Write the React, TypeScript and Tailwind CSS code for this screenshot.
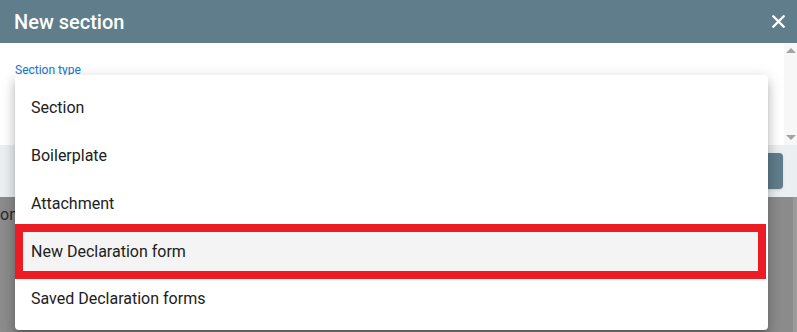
import { X } from "lucide-react";

const items = [
  "Section",
  "Boilerplate",
  "Attachment",
  "New Declaration form",
  "Saved Declaration forms",
];

export default function App() {
  return (
    <div className="relative w-[797px] h-[332px] overflow-hidden bg-[#8b8b8b] font-['Roboto',sans-serif]">
      <div className="flex flex-col">
        <header className="flex h-[43px] items-center justify-between bg-[#607d8b] pl-[14px] pr-[8px] text-white">
          <h1 className="text-[20px] font-medium leading-none">New section</h1>
          <X className="h-[21px] w-[21px]" strokeWidth={2.75} />
        </header>
        <div className="flex h-[102px] bg-white">
          <div className="flex-1 pl-[15px] pt-[21px]">
            <p className="text-[12px] leading-none text-[#1976d2]">Section type</p>
          </div>
          <div className="flex w-[13px] flex-col items-center justify-between bg-[#f7f7f7] py-[5px]">
            <span className="h-0 w-0 border-x-[5px] border-b-[5px] border-x-transparent border-b-[#a3a3a3]" />
            <span className="h-0 w-0 border-x-[5px] border-t-[5px] border-x-transparent border-t-[#a3a3a3]" />
          </div>
        </div>
        <div className="flex h-[52px] items-start justify-end bg-[#eceff1] pr-[14px] pt-[8px]">
          <button className="h-[36px] rounded-[4px] bg-[#607d8b] px-4 text-[14px] font-medium text-white shadow">
            SAVE
          </button>
        </div>
        <div className="flex h-[135px]">
          <p className="mt-[6px] text-[16px] text-[#2a2a2a]">on</p>
          <div className="ml-auto h-full w-[4px] bg-[#9a9a9a]" />
        </div>
      </div>

      <ul className="absolute left-[15px] top-[75px] w-[753px] rounded-[4px] bg-white pb-[7px] pt-[9px] shadow-[0_5px_5px_-3px_rgba(0,0,0,0.2),0_8px_10px_1px_rgba(0,0,0,0.14),0_3px_14px_2px_rgba(0,0,0,0.12)]">
        {items.map((label) =>
          label === "New Declaration form" ? (
            <li
              key={label}
              className="flex h-[55px] items-center border-[8px] border-[#ed1c24] bg-[#f4f4f4] pl-[8px] text-[16px] text-[#212121] -my-[4px] mr-[2px]"
            >
              {label}
            </li>
          ) : (
            <li key={label} className="flex h-[48px] items-center pl-[16px] text-[16px] text-[#212121]">
              {label}
            </li>
          )
        )}
      </ul>
    </div>
  );
}
